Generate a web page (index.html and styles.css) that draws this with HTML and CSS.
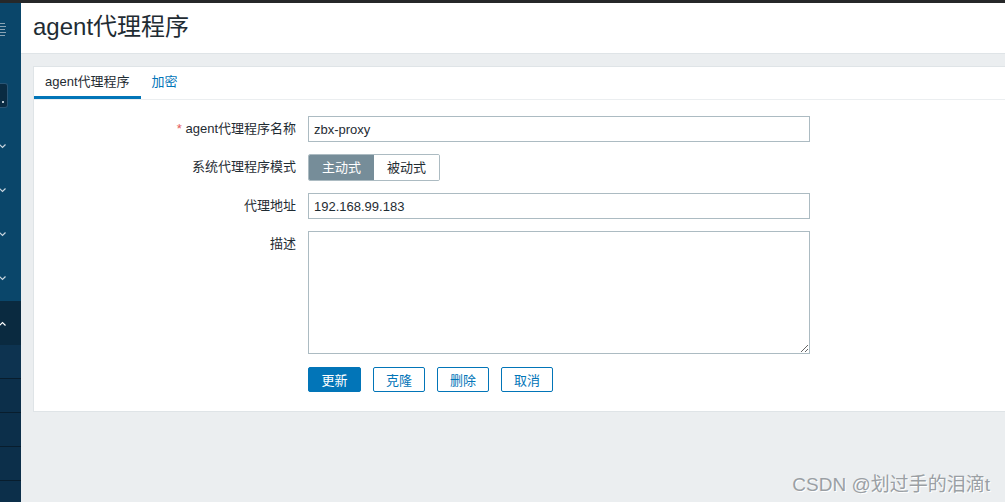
FILE: index.html
```html
<!DOCTYPE html>
<html lang="zh">
<head>
<meta charset="utf-8">
<title>agent代理程序</title>
<link rel="stylesheet" href="styles.css">
</head>
<body>
<div class="topline"></div>
<div class="layout">
  <nav class="sidebar">
    <div class="sb-logo">
      <svg width="7" height="16" viewBox="0 0 7 16"><g stroke="#8aa3b4" stroke-width="1"><line x1="0" y1="1.5" x2="5" y2="1.5"/><line x1="0" y1="4.5" x2="6" y2="4.5"/><line x1="0" y1="7.5" x2="5" y2="7.5"/><line x1="0" y1="10.5" x2="6" y2="10.5"/><line x1="0" y1="13.5" x2="5" y2="13.5"/></g></svg>
    </div>
    <div class="sb-search"><span class="sb-search-dot"></span></div>
    <div class="sb-menu">
      <div class="sb-item"><svg class="chev" width="7" height="5" viewBox="0 0 7 5"><polyline points="0.5,0.5 3.5,3.5 6.5,0.5" fill="none" stroke="#c9d5de" stroke-width="1.2"/></svg></div>
      <div class="sb-item"><svg class="chev" width="7" height="5" viewBox="0 0 7 5"><polyline points="0.5,0.5 3.5,3.5 6.5,0.5" fill="none" stroke="#c9d5de" stroke-width="1.2"/></svg></div>
      <div class="sb-item"><svg class="chev" width="7" height="5" viewBox="0 0 7 5"><polyline points="0.5,0.5 3.5,3.5 6.5,0.5" fill="none" stroke="#c9d5de" stroke-width="1.2"/></svg></div>
      <div class="sb-item"><svg class="chev" width="7" height="5" viewBox="0 0 7 5"><polyline points="0.5,0.5 3.5,3.5 6.5,0.5" fill="none" stroke="#c9d5de" stroke-width="1.2"/></svg></div>
      <div class="sb-item sb-active"><svg class="chev" width="7" height="5" viewBox="0 0 7 5"><polyline points="0.5,4.5 3.5,1.5 6.5,4.5" fill="none" stroke="#ffffff" stroke-width="1.2"/></svg></div>
      <div class="sb-sub"></div>
      <div class="sb-sub"></div>
      <div class="sb-sub"></div>
      <div class="sb-sub"></div>
      <div class="sb-sub"></div>
    </div>
  </nav>
  <main class="main">
    <header class="page-header">
      <h1 class="page-title">agent代理程序</h1>
    </header>
    <div class="content">
      <section class="card">
        <ul class="tabs">
          <li class="tab tab-active">agent代理程序</li>
          <li class="tab tab-link">加密</li>
        </ul>
        <form class="form">
          <label class="label"><span class="req">*</span> agent代理程序名称</label>
          <div class="control"><input class="input" type="text" value="zbx-proxy"></div>

          <label class="label">系统代理程序模式</label>
          <div class="control">
            <div class="segmented">
              <span class="seg seg-on">主动式</span>
              <span class="seg">被动式</span>
            </div>
          </div>

          <label class="label">代理地址</label>
          <div class="control"><input class="input" type="text" value="192.168.99.183"></div>

          <label class="label">描述</label>
          <div class="control"><textarea class="textarea"></textarea></div>

          <div class="spacer"></div>
          <div class="buttons">
            <button type="button" class="btn btn-primary">更新</button>
            <button type="button" class="btn">克隆</button>
            <button type="button" class="btn">删除</button>
            <button type="button" class="btn">取消</button>
          </div>
        </form>
      </section>
    </div>
  </main>
</div>
<div class="watermark">CSDN @划过手的泪滴t</div>
</body>
</html>
```

FILE: styles.css
```css
* { box-sizing: border-box; }

html, body {
  margin: 0;
  padding: 0;
  height: 100%;
}

body {
  font-family: "Liberation Sans", Arial, "Noto Sans CJK SC", sans-serif;
  font-size: 13px;
  color: #1f2c33;
  background: #ebeef0;
  overflow: hidden;
  position: relative;
}

.topline {
  height: 3px;
  background: #262829;
}

.layout {
  display: flex;
  height: calc(100% - 3px);
}

/* Sidebar */
.sidebar {
  width: 21px;
  flex: 0 0 21px;
  background: #0a466a;
  display: flex;
  flex-direction: column;
  overflow: hidden;
}

.sidebar > *, .sb-menu > * { flex-shrink: 0; }

.sb-logo {
  height: 80px;
  padding-top: 19px;
  display: flex;
  align-items: flex-start;
}

.sb-search {
  width: 8px;
  height: 25px;
  background: #0a2b42;
  border: 1px solid #2a5575;
  border-left: none;
  border-radius: 0 3px 3px 0;
}

.sb-search-dot {
  display: block;
  width: 2px;
  height: 2px;
  background: #b8c6d0;
  margin: 17px 0 0 2px;
}

.sb-menu {
  margin-top: 16px;
  display: flex;
  flex-direction: column;
}

.sb-item {
  height: 44px;
  display: flex;
  align-items: center;
}

.sb-item:nth-child(4) { height: 45px; }

.chev { display: block; margin-left: -1px; }

.sb-active {
  background: #0a2a40;
}

.sb-sub {
  height: 34px;
  background: #0d3350;
  border-bottom: 1px solid #081d2d;
}

.sb-sub:nth-child(n+7) { background: #0c2f4a; }

/* Main */
.main {
  flex: 1;
  display: flex;
  flex-direction: column;
  min-width: 0;
}

.page-header {
  background: #ffffff;
  height: 51px;
  border-bottom: 1px solid #dfe4e7;
  padding: 0 12px;
  display: flex;
  align-items: center;
  flex-shrink: 0;
}

.page-title {
  margin: 0;
  font-size: 24px;
  font-weight: normal;
  color: #1f2c33;
  line-height: 1;
  padding-bottom: 3px;
}

.content {
  padding: 12px 0 0 12px;
}

.card {
  background: #ffffff;
  border: 1px solid #dfe4e7;
  border-right: none;
  padding-bottom: 19px;
}

/* Tabs */
.tabs {
  list-style: none;
  margin: 0;
  padding: 0;
  display: flex;
  border-bottom: 1px solid #ebeef0;
  height: 33px;
}

.tab {
  padding: 0 11px;
  height: 32px;
  line-height: 30px;
  font-size: 13px;
}

.tab-active {
  border-bottom: 3px solid #0275b8;
  color: #1f2c33;
}

.tab-link {
  color: #0275b8;
}

/* Form */
.form {
  display: grid;
  grid-template-columns: 262px 502px;
  column-gap: 12px;
  row-gap: 12px;
  padding-top: 16px;
}

.label {
  text-align: right;
  line-height: 26px;
  font-size: 13px;
  color: #1f2c33;
  white-space: nowrap;
}

.req { color: #e45959; }

.control { display: flex; }

.input {
  width: 502px;
  height: 26px;
  border: 1px solid #acbbc2;
  border-radius: 0;
  padding: 0 5px;
  font-family: "Liberation Sans", Arial, "Noto Sans CJK SC", sans-serif;
  font-size: 13px;
  color: #1f2c33;
  background: #ffffff;
  outline: none;
}

.segmented {
  display: flex;
  height: 27px;
  border: 1px solid #acbbc2;
  border-radius: 2px;
  overflow: hidden;
}

.seg {
  width: 65px;
  line-height: 25px;
  text-align: center;
  font-size: 13px;
  color: #1f2c33;
  background: #ffffff;
}

.seg-on {
  background: #768d99;
  color: #ffffff;
}

.textarea {
  width: 502px;
  height: 123px;
  border: 1px solid #acbbc2;
  border-radius: 0;
  padding: 4px 5px;
  font-family: "Liberation Sans", Arial, "Noto Sans CJK SC", sans-serif;
  font-size: 13px;
  resize: both;
  outline: none;
  display: block;
}

.spacer { height: 1px; }

.buttons {
  display: flex;
  gap: 12px;
  margin-top: 1px;
}

.btn {
  width: 52px;
  height: 25px;
  border: 1px solid #0275b8;
  border-radius: 2px;
  background: #ffffff;
  color: #0275b8;
  font-family: "Liberation Sans", Arial, "Noto Sans CJK SC", sans-serif;
  font-size: 13px;
  padding: 0;
  cursor: pointer;
}

.btn-primary {
  width: 53px;
  background: #0275b8;
  color: #ffffff;
}

.watermark {
  position: absolute;
  right: 15px;
  bottom: 6px;
  font-size: 19px;
  color: #9a9fa4;
  text-shadow: 1px 1px 0 #ffffff;
  font-family: "Liberation Sans", Arial, "Noto Sans CJK SC", sans-serif;
}
```
